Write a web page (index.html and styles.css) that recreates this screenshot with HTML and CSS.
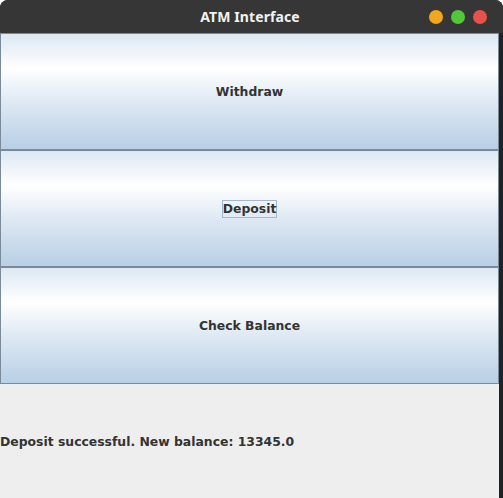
FILE: index.html
```html
<!DOCTYPE html>
<html>
<head>
<meta charset="utf-8">
<title>ATM Interface</title>
<link rel="stylesheet" href="styles.css">
</head>
<body>
<div class="window">
  <div class="titlebar">
    <span class="title">ATM Interface</span>
    <div class="controls">
      <span class="dot dot-min"></span>
      <span class="dot dot-max"></span>
      <span class="dot dot-close"></span>
    </div>
  </div>
  <div class="frame">
    <div class="content">
      <div class="buttons">
        <button class="btn"><span class="btn-label">Withdraw</span></button>
        <button class="btn"><span class="btn-label focused">Deposit</span></button>
        <button class="btn"><span class="btn-label">Check Balance</span></button>
      </div>
      <div class="status">Deposit successful. New balance: 13345.0</div>
    </div>
    <div class="edge"></div>
  </div>
</div>
</body>
</html>
```
FILE: styles.css
```css
html, body {
  margin: 0;
  padding: 0;
  background: #ffffff;
}
body {
  width: 503px;
  height: 498px;
  overflow: hidden;
  font-family: "DejaVu Sans", "Liberation Sans", sans-serif;
}
.window {
  width: 503px;
  height: 498px;
  display: flex;
  flex-direction: column;
  background: #1f2326;
  border-radius: 8px 8px 0 0;
  overflow: hidden;
}
.titlebar {
  height: 33px;
  flex: none;
  background: #363636;
  position: relative;
  display: flex;
  align-items: center;
  justify-content: center;
}
.title {
  color: #f2f2f2;
  font-family: "Noto Sans", "DejaVu Sans", sans-serif;
  font-weight: bold;
  font-size: 14px;
  letter-spacing: 0.1px;
  margin-left: -3px;
}
.controls {
  position: absolute;
  right: 16px;
  top: 10px;
  display: flex;
  gap: 8px;
}
.dot {
  width: 14px;
  height: 14px;
  border-radius: 50%;
  display: block;
}
.dot-min { background: #f0a71c; }
.dot-max { background: #50c83a; }
.dot-close { background: #e8524d; }
.frame {
  flex: 1;
  display: flex;
  min-height: 0;
}
.content {
  width: 499px;
  flex: none;
  display: flex;
  flex-direction: column;
  background: #eeeeee;
}
.edge {
  flex: 1;
  background: #1f2326;
}
.buttons {
  display: flex;
  flex-direction: column;
}
.btn {
  height: 117px;
  margin: 0;
  padding: 0;
  border: 1px solid #7a8a99;
  background: linear-gradient(to bottom, #dde8f3 0%, #ffffff 30%, #dde8f3 60%, #b8cfe5 100%);
  display: flex;
  align-items: center;
  justify-content: center;
  font-family: "DejaVu Sans", sans-serif;
  font-weight: bold;
  font-size: 12.4px;
  color: #333333;
  cursor: default;
}
.btn-label {
  padding: 1px 0;
  border: 1px solid transparent;
  line-height: 14px;
}
.btn-label.focused {
  border-color: #a3b8cc;
}
.status {
  flex: 1;
  display: flex;
  align-items: center;
  font-family: "DejaVu Sans", sans-serif;
  font-weight: bold;
  font-size: 12.4px;
  color: #333333;
  padding-top: 1px;
}
```
